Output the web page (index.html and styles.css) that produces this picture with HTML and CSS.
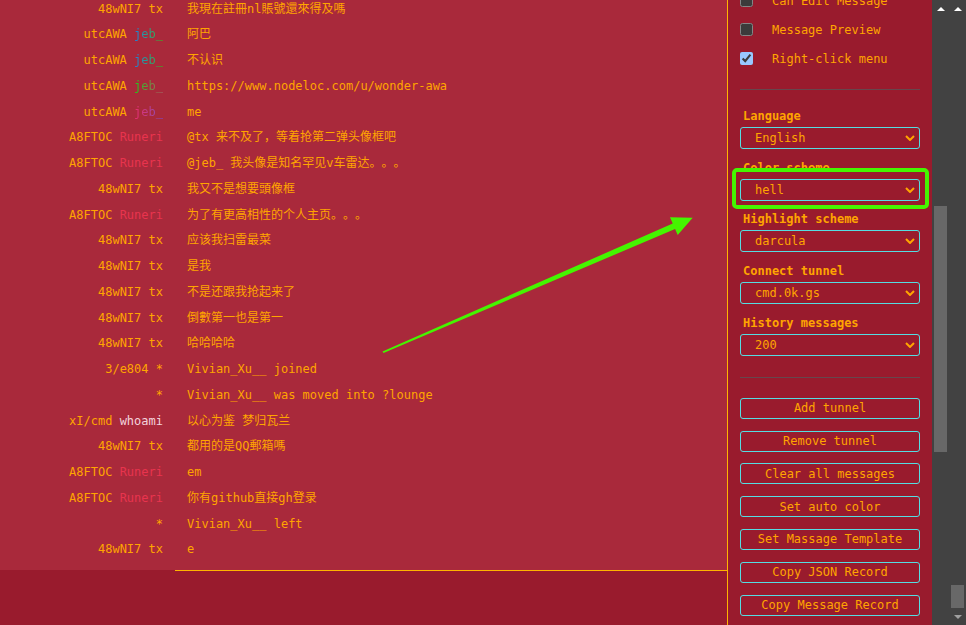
FILE: index.html
```html
<!DOCTYPE html>
<html>
  <head>
    <meta charset="utf-8" />
    <meta name="viewport" content="width=device-width, initial-scale=1.0" />
    <link rel="stylesheet" href="styles.css">
  </head>
  <body>
    <div id="app">
      <main class="chat">
        <div class="messages">
          <div class="msg"><span class="nick"><span class="trip">48wNI7</span> tx</span><span class="text">我現在註冊nl賬號還來得及嗎</span></div>
          <div class="msg"><span class="nick"><span class="trip">utcAWA</span> <span class="name jeb-a">jeb_</span></span><span class="text">阿巴</span></div>
          <div class="msg"><span class="nick"><span class="trip">utcAWA</span> <span class="name jeb-a">jeb_</span></span><span class="text">不认识</span></div>
          <div class="msg"><span class="nick"><span class="trip">utcAWA</span> <span class="name jeb-b">jeb_</span></span><span class="text">https://www.nodeloc.com/u/wonder-awa</span></div>
          <div class="msg"><span class="nick"><span class="trip">utcAWA</span> <span class="name jeb-c">jeb_</span></span><span class="text">me</span></div>
          <div class="msg"><span class="nick"><span class="trip">A8FTOC</span> <span class="runeri">Runeri</span></span><span class="text">@tx 来不及了，等着抢第二弹头像框吧</span></div>
          <div class="msg"><span class="nick"><span class="trip">A8FTOC</span> <span class="runeri">Runeri</span></span><span class="text">@jeb_ 我头像是知名罕见v车雷达。。。</span></div>
          <div class="msg"><span class="nick"><span class="trip">48wNI7</span> tx</span><span class="text">我又不是想要頭像框</span></div>
          <div class="msg"><span class="nick"><span class="trip">A8FTOC</span> <span class="runeri">Runeri</span></span><span class="text">为了有更高相性的个人主页。。。</span></div>
          <div class="msg"><span class="nick"><span class="trip">48wNI7</span> tx</span><span class="text">应该我扫雷最菜</span></div>
          <div class="msg"><span class="nick"><span class="trip">48wNI7</span> tx</span><span class="text">是我</span></div>
          <div class="msg"><span class="nick"><span class="trip">48wNI7</span> tx</span><span class="text">不是还跟我抢起来了</span></div>
          <div class="msg"><span class="nick"><span class="trip">48wNI7</span> tx</span><span class="text">倒數第一也是第一</span></div>
          <div class="msg"><span class="nick"><span class="trip">48wNI7</span> tx</span><span class="text">哈哈哈哈</span></div>
          <div class="msg"><span class="nick"><span class="trip">3/e804</span> *</span><span class="text">Vivian_Xu__ joined</span></div>
          <div class="msg"><span class="nick">*</span><span class="text">Vivian_Xu__ was moved into ?lounge</span></div>
          <div class="msg"><span class="nick"><span class="trip">xI/cmd</span> <span class="whoami">whoami</span></span><span class="text">以心为鉴 梦归瓦兰</span></div>
          <div class="msg"><span class="nick"><span class="trip">48wNI7</span> tx</span><span class="text">都用的是QQ郵箱嗎</span></div>
          <div class="msg"><span class="nick"><span class="trip">A8FTOC</span> <span class="runeri">Runeri</span></span><span class="text">em</span></div>
          <div class="msg"><span class="nick"><span class="trip">A8FTOC</span> <span class="runeri">Runeri</span></span><span class="text">你有github直接gh登录</span></div>
          <div class="msg"><span class="nick">*</span><span class="text">Vivian_Xu__ left</span></div>
          <div class="msg"><span class="nick"><span class="trip">48wNI7</span> tx</span><span class="text">e</span></div>
        </div>
        <div class="input-bar">
          <div class="input-side"></div>
          <div class="input-box"></div>
        </div>
      </main>

      <aside class="sidebar">
        <div class="sidebar-inner">
          <label class="check-row"><input type="checkbox" /> Can Edit Message</label>
          <label class="check-row"><input type="checkbox" /> Message Preview</label>
          <label class="check-row"><input type="checkbox" checked /> Right-click menu</label>

          <div class="sep"></div>

          <div class="field">
            <h4>Language</h4>
            <div class="select-wrap">
              <select><option>English</option></select>
              <svg class="chev" width="10" height="6" viewBox="0 0 10 6"><path d="M1 1 L5 5 L9 1" fill="none" stroke="#ffa500" stroke-width="2"/></svg>
            </div>
          </div>
          <div class="field">
            <h4>Color scheme</h4>
            <div class="select-wrap">
              <select><option>hell</option></select>
              <svg class="chev" width="10" height="6" viewBox="0 0 10 6"><path d="M1 1 L5 5 L9 1" fill="none" stroke="#ffa500" stroke-width="2"/></svg>
            </div>
          </div>
          <div class="field">
            <h4>Highlight scheme</h4>
            <div class="select-wrap">
              <select><option>darcula</option></select>
              <svg class="chev" width="10" height="6" viewBox="0 0 10 6"><path d="M1 1 L5 5 L9 1" fill="none" stroke="#ffa500" stroke-width="2"/></svg>
            </div>
          </div>
          <div class="field">
            <h4>Connect tunnel</h4>
            <div class="select-wrap">
              <select><option>cmd.0k.gs</option></select>
              <svg class="chev" width="10" height="6" viewBox="0 0 10 6"><path d="M1 1 L5 5 L9 1" fill="none" stroke="#ffa500" stroke-width="2"/></svg>
            </div>
          </div>
          <div class="field">
            <h4>History messages</h4>
            <div class="select-wrap">
              <select><option>200</option></select>
              <svg class="chev" width="10" height="6" viewBox="0 0 10 6"><path d="M1 1 L5 5 L9 1" fill="none" stroke="#ffa500" stroke-width="2"/></svg>
            </div>
          </div>

          <div class="sep sep-2"></div>

          <div class="buttons">
            <button>Add tunnel</button>
            <button>Remove tunnel</button>
            <button>Clear all messages</button>
            <button>Set auto color</button>
            <button>Set Massage Template</button>
            <button>Copy JSON Record</button>
            <button>Copy Message Record</button>
          </div>
        </div>
      </aside>

      <div class="scrollbars">
        <div class="track track-side">
          <span class="arrow-up"></span>
          <span class="thumb"></span>
        </div>
        <div class="track track-page">
          <span class="arrow-up"></span>
          <span class="thumb"></span>
          <span class="arrow-down"></span>
        </div>
      </div>
    </div>

    <!-- annotation over the screenshot -->
    <svg class="mark" width="966" height="625" viewBox="0 0 966 625">
      <rect x="734" y="170" width="193" height="37" rx="3" fill="none" stroke="#45f500" stroke-width="4"/>
      <polygon fill="#45f500" points="382.5,351.5 672.7,223.4 670,217.3 692.7,217.7 677.7,235 675.1,229 383.5,353"/>
    </svg>
  </body>
</html>
```

FILE: styles.css
```css
* {
  margin: 0;
  padding: 0;
  box-sizing: border-box;
}

html,
body {
  height: 100%;
}

body {
  font-family: 'DejaVu Sans Mono', 'Noto Sans CJK SC', monospace;
  font-size: 12px;
  color: #ffa500;
  background-color: #991b2d;
  overflow: hidden;
  text-spacing-trim: space-all;
}

#app {
  display: flex;
  height: 625px;
}

/* chat */
.chat {
  flex: 0 0 727px;
  display: flex;
  flex-direction: column;
}

.messages {
  flex: 1;
  display: flex;
  flex-direction: column;
  justify-content: flex-end;
  overflow: hidden;
  padding-bottom: 7px;
  background-color: #a9293b;
}

.msg {
  display: flex;
  flex: 0 0 auto;
  height: 25.76px;
  line-height: 25.76px;
  white-space: nowrap;
}

.nick {
  flex: 0 0 163px;
  text-align: right;
}

.text {
  padding-left: 24px;
}

.runeri {
  color: #e8344e;
}

.whoami {
  color: #f3d2dc;
}

.name {
  display: inline-block;
  -webkit-background-clip: text;
  background-clip: text;
  color: transparent;
}

.jeb-a {
  background-image: linear-gradient(90deg, #1f7fe0, #2a9d8c 45%, #35a85c 75%, #10e010);
}

.jeb-b {
  background-image: linear-gradient(90deg, #14d414, #5f9a3e 45%, #8c7850 75%, #a07a70);
}

.jeb-c {
  background-image: linear-gradient(90deg, #ec2c6c, #c03c8c 45%, #9c48a8 75%, #6c50f0);
}

.input-bar {
  flex: 0 0 55px;
  display: flex;
  background-color: #991b2d;
}

.input-side {
  flex: 0 0 175px;
}

.input-box {
  flex: 1;
  border-top: 1px solid #ffb400;
}

/* sidebar */
.sidebar {
  flex: 0 0 205px;
  border-left: 1px solid #ffb400;
  background-color: #991b2d;
  overflow: hidden;
}

.sidebar-inner {
  margin-top: -14px;
  padding: 0 12px;
}

.check-row {
  display: flex;
  align-items: center;
  height: 29px;
  white-space: nowrap;
}

.check-row input {
  width: 13px;
  height: 13px;
  margin: 0 19px 0 0;
  color-scheme: dark;
}

.sep {
  border-top: 1px solid #66474d;
  margin: 16px 0 17px;
}

.sep-2 {
  margin: 21px 0 20px;
}

.field + .field {
  margin-top: 9.7px;
}

.field h4 {
  font-size: 12px;
  line-height: 16px;
  padding-left: 3px;
  margin-bottom: 4px;
  padding-top: 1px;
  height: 16px;
}

.select-wrap {
  position: relative;
}

.select-wrap select {
  -webkit-appearance: none;
  appearance: none;
  display: block;
  width: 100%;
  height: 22px;
  padding: 0 0 0 14px;
  font-family: inherit;
  font-size: 12px;
  color: #ffa500;
  background-color: transparent;
  border: 1px solid #55dde2;
  border-radius: 3px;
  outline: none;
}

.chev {
  position: absolute;
  right: 5px;
  top: 8px;
}

.buttons {
  display: flex;
  flex-direction: column;
  gap: 11.8px;
}

.buttons button {
  height: 21px;
  font-family: inherit;
  font-size: 12px;
  color: #ffa500;
  background-color: transparent;
  border: 1px solid #55dde2;
  border-radius: 3px;
}

/* scrollbars */
.scrollbars {
  flex: 1;
  display: flex;
  background-color: #424242;
}

.track {
  flex: 0 0 17px;
  display: flex;
  flex-direction: column;
  align-items: center;
}

.thumb {
  width: 13px;
  background-color: #686868;
}

.track-side .thumb {
  margin-top: 195px;
  height: 246px;
}

.track-page .thumb {
  margin-top: 574px;
  height: 23px;
}

.arrow-up,
.arrow-down {
  width: 0;
  height: 0;
  border-left: 4px solid transparent;
  border-right: 4px solid transparent;
}

.arrow-up {
  margin-top: 7px;
  border-bottom: 4px solid #fff;
}

.arrow-down {
  margin-top: 7px;
  border-top: 4px solid #a0a0a0;
}

.mark {
  position: absolute;
  top: 0;
  left: 0;
  pointer-events: none;
}
```
